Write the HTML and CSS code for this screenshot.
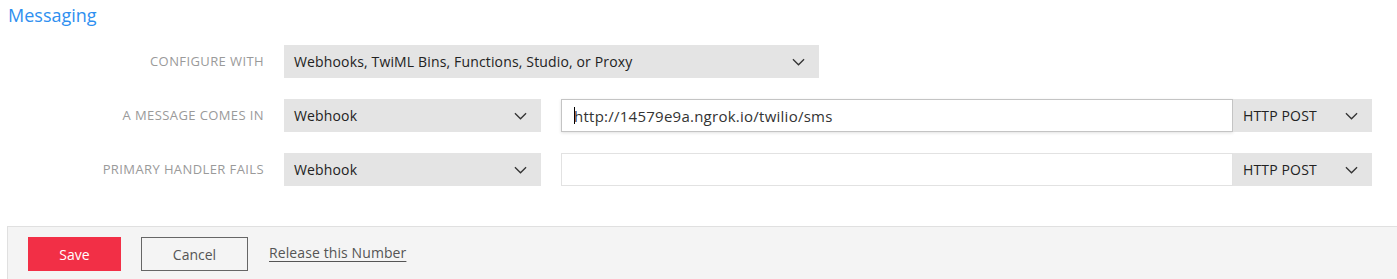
FILE: index.html
```html
<!DOCTYPE html>
<html lang="en">
<head>
    <meta charset="UTF-8">
    <title>Messaging</title>
    <link rel="stylesheet" href="styles.css">
</head>
<body>
    <h2 class="section-title">Messaging</h2>

    <div class="form">
        <div class="form-row">
            <label class="form-label">Configure with</label>
            <div class="select select-wide">
                <span>Webhooks, TwiML Bins, Functions, Studio, or Proxy</span>
                <svg class="chevron" viewBox="0 0 14 8"><path d="M1 1l6 6 6-6"/></svg>
            </div>
        </div>
        <div class="form-row">
            <label class="form-label">A message comes in</label>
            <div class="select select-short">
                <span>Webhook</span>
                <svg class="chevron" viewBox="0 0 14 8"><path d="M1 1l6 6 6-6"/></svg>
            </div>
            <div class="url-group">
                <div class="url-input focused"><span class="caret"></span>http://14579e9a.ngrok.io/twilio/sms</div>
                <div class="select select-method">
                    <span>HTTP POST</span>
                    <svg class="chevron" viewBox="0 0 14 8"><path d="M1 1l6 6 6-6"/></svg>
                </div>
            </div>
        </div>
        <div class="form-row">
            <label class="form-label">Primary handler fails</label>
            <div class="select select-short">
                <span>Webhook</span>
                <svg class="chevron" viewBox="0 0 14 8"><path d="M1 1l6 6 6-6"/></svg>
            </div>
            <div class="url-group">
                <div class="url-input"></div>
                <div class="select select-method">
                    <span>HTTP POST</span>
                    <svg class="chevron" viewBox="0 0 14 8"><path d="M1 1l6 6 6-6"/></svg>
                </div>
            </div>
        </div>
    </div>

    <div class="footer">
        <button class="btn btn-save">Save</button>
        <button class="btn btn-cancel">Cancel</button>
        <a class="release-link" href="#">Release this Number</a>
    </div>
</body>
</html>
```

FILE: styles.css
```css
body {
    margin: 0;
    font-family: "Open Sans", "Noto Sans", sans-serif;
    color: #222;
    background: #fff;
}

.section-title {
    margin: 0;
    padding: 3px 0 0 8px;
    height: 45px;
    box-sizing: border-box;
    font-size: 18px;
    font-weight: 400;
    color: #2e8ff0;
}

.form {
    display: flex;
    flex-direction: column;
    gap: 21px;
}

.form-row {
    display: flex;
    align-items: center;
    height: 33px;
}

.form-label {
    width: 264px;
    padding-right: 20px;
    box-sizing: content-box;
    text-align: right;
    font-size: 13px;
    letter-spacing: 0.4px;
    text-transform: uppercase;
    color: #9a9a9a;
    position: relative;
    top: -1px;
}

.select {
    display: flex;
    align-items: center;
    justify-content: space-between;
    height: 33px;
    box-sizing: border-box;
    padding: 0 14px 0 10px;
    background: #e4e4e4;
    font-size: 14px;
    letter-spacing: 0.15px;
    color: #222;
}

.select-wide {
    width: 535px;
}

.select-short {
    width: 257px;
}

.select-method {
    width: 139px;
}

.chevron {
    width: 13px;
    height: 8px;
    fill: none;
    stroke: #333;
    stroke-width: 1.4;
}

.url-group {
    display: flex;
    margin-left: 20px;
}

.url-input {
    width: 672px;
    height: 33px;
    box-sizing: border-box;
    border: 1px solid #e2e2e2;
    padding: 0 12px;
    display: flex;
    align-items: center;
    font-size: 15px;
    letter-spacing: 0.25px;
    color: #333;
}

.url-input.focused {
    border-color: #c4c4c4;
    box-shadow: 0 1px 3px rgba(0, 0, 0, 0.12);
}

.caret {
    width: 1px;
    height: 17px;
    background: #000;
    margin-right: -1px;
}

.footer {
    margin: 40px 0 0 7px;
    height: 53px;
    background: #f4f4f4;
    border-top: 1px solid #e0e0e0;
    border-left: 1px solid #e0e0e0;
    display: flex;
    align-items: flex-start;
    padding: 10px 0 0 20px;
    box-sizing: border-box;
}

.btn {
    height: 34px;
    font-family: inherit;
    font-size: 14px;
    border-radius: 0;
    cursor: pointer;
}

.btn-save {
    width: 93px;
    background: #f22f46;
    border: none;
    color: #fff;
}

.btn-cancel {
    width: 107px;
    margin-left: 20px;
    background: transparent;
    border: 1px solid #666;
    color: #555;
}

.release-link {
    margin-left: 21px;
    line-height: 32px;
    font-size: 14px;
    letter-spacing: 0.1px;
    color: #555;
    text-decoration: underline;
    text-underline-offset: 3px;
}
```
